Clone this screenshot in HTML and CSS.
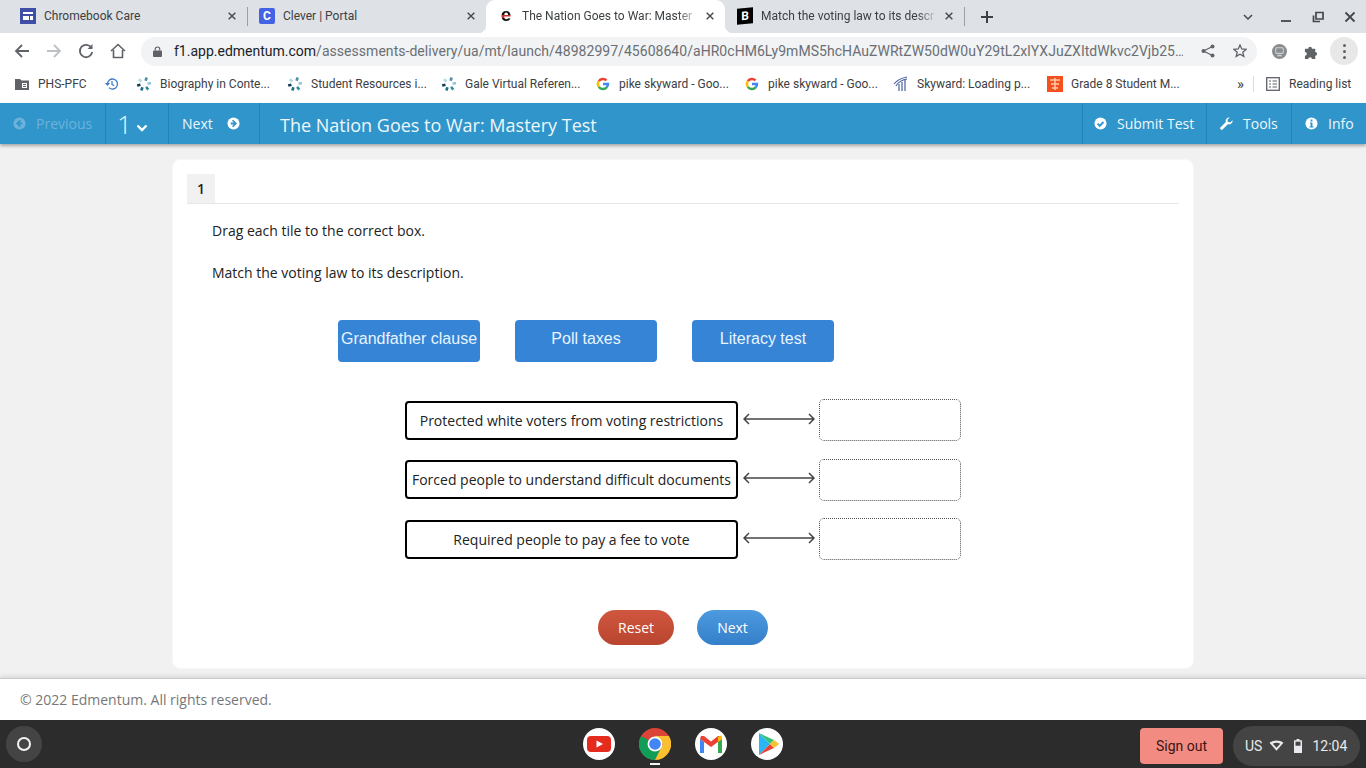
FILE: index.html
```html
<!DOCTYPE html>
<html lang="en">
<head>
    <meta charset="UTF-8">
    <meta name="viewport" content="width=device-width, initial-scale=1.0">
    <title>The Nation Goes to War: Mastery Test</title>
    <link rel="stylesheet" href="styles.css">
</head>
<body>
    <svg class="defs" width="0" height="0">
        <symbol id="i-close" viewBox="0 0 12 12"><path d="M2 2l8 8M10 2l-8 8" fill="none" stroke="currentColor" stroke-width="1.7"/></symbol>
        <symbol id="i-spin" viewBox="0 0 16 16">
            <g fill="#4f8fa8"><rect x="7" y="1" width="2.6" height="3.4" transform="rotate(20 8 8)"/><rect x="7" y="1" width="2.6" height="3.4" transform="rotate(80 8 8)" fill="#8cc6d8"/><rect x="7" y="1" width="2.6" height="3.4" transform="rotate(140 8 8)" fill="#2f8f9e"/><rect x="7" y="1" width="2.6" height="3.4" transform="rotate(200 8 8)" fill="#1e6f85"/><rect x="7" y="1" width="2.6" height="3.4" transform="rotate(255 8 8)" fill="#123f5c"/><rect x="7" y="1" width="2.6" height="3.4" transform="rotate(310 8 8)" fill="#b5dbe6"/></g>
        </symbol>
        <symbol id="i-google" viewBox="0 0 16 16">
            <g fill="none" stroke-width="2.4">
                <path d="M3.800 5.200A5 5 0 0 1 11.500 4.400" stroke="#ea4335"/>
                <path d="M3.800 5.200A5 5 0 0 0 3.800 10.800" stroke="#fbbc05"/>
                <path d="M3.800 10.800A5 5 0 0 0 11.800 11.200" stroke="#34a853"/>
                <path d="M11.800 11.200A5 5 0 0 0 13 8H8" stroke="#4285f4"/>
            </g>
        </symbol>
    </svg>

    <div class="screen">
        <!-- browser tabs -->
        <div class="tabstrip">
            <div class="tab tab-sep">
                <svg class="favicon" viewBox="0 0 16 16"><rect width="16" height="16" fill="#3f4fa8"/><path d="M3 4h10v2H3zM3 8h6v4H3zM10 8h3v4h-3z" fill="#fff"/></svg>
                <span class="tab-title">Chromebook Care</span>
                <svg class="tab-close"><use href="#i-close"/></svg>
            </div>
            <div class="tab">
                <span class="favicon clever">C</span>
                <span class="tab-title">Clever | Portal</span>
                <svg class="tab-close"><use href="#i-close"/></svg>
            </div>
            <div class="tab tab-active">
                <span class="favicon edm">e</span>
                <span class="tab-title tab-fade">The Nation Goes to War: Master</span>
                <svg class="tab-close"><use href="#i-close"/></svg>
            </div>
            <div class="tab tab-sep">
                <span class="favicon brainly">B</span>
                <span class="tab-title tab-fade">Match the voting law to its descr</span>
                <svg class="tab-close"><use href="#i-close"/></svg>
            </div>
            <svg class="new-tab" viewBox="0 0 12 12"><path d="M6 0v12M0 6h12" stroke="#3c4043" stroke-width="2"/></svg>
            <div class="window-btns">
                <svg class="win-icon" viewBox="0 0 12 12"><path d="M2 4l4 4 4-4" fill="none" stroke="#44474a" stroke-width="1.500"/></svg>
                <svg class="win-icon win-min" viewBox="0 0 12 12"><path d="M1 10h10" stroke="#44474a" stroke-width="1.800"/></svg>
                <svg class="win-icon win-max" viewBox="0 0 12 12"><path d="M4 1.500h7v6.500H4zM1.500 4.500V10.500H8" fill="none" stroke="#44474a" stroke-width="1.700"/></svg>
                <svg class="win-icon win-x" viewBox="0 0 12 12"><path d="M1.500 1.500l9 9M10.500 1.500l-9 9" stroke="#44474a" stroke-width="1.800"/></svg>
            </div>
        </div>

        <!-- address bar -->
        <div class="toolbar">
            <svg class="tool" viewBox="0 0 16 16"><path d="M15 8H2M8 2L2 8l6 6" fill="none" stroke="#5f6368" stroke-width="1.800"/></svg>
            <svg class="tool" viewBox="0 0 16 16"><path d="M1 8h13M8 2l6 6-6 6" fill="none" stroke="#bdc1c6" stroke-width="1.800"/></svg>
            <svg class="tool" viewBox="0 0 16 16"><path d="M13.500 5A6.200 6.200 0 1 0 14.200 9" fill="none" stroke="#5f6368" stroke-width="1.800"/><path d="M14.500 1v5h-5z" fill="#5f6368"/></svg>
            <svg class="tool" viewBox="0 0 16 16"><path d="M1 8l7-6.500L15 8M3.500 7v7.500h9V7" fill="none" stroke="#5f6368" stroke-width="1.600"/></svg>
            <div class="omnibox">
                <svg class="lock" viewBox="0 0 10 12"><path d="M2.500 5V3.500a2.500 2.500 0 0 1 5 0V5" fill="none" stroke="#5f6368" stroke-width="1.300"/><rect y="5" width="10" height="7" rx="1" fill="#5f6368"/></svg>
                <span class="url"><span class="url-host">f1.app.edmentum.com</span>/assessments-delivery/ua/mt/launch/48982997/45608640/aHR0cHM6Ly9mMS5hcHAuZWRtZW50dW0uY29tL2xlYXJuZXItdWkvc2Vjb25…</span>
                <svg class="omni-icon" viewBox="0 0 14 14"><circle cx="11.500" cy="2.500" r="2" fill="#5f6368"/><circle cx="2.500" cy="7" r="2" fill="#5f6368"/><circle cx="11.500" cy="11.500" r="2" fill="#5f6368"/><path d="M11.500 2.500L2.500 7l9 4.500" fill="none" stroke="#5f6368" stroke-width="1.300"/></svg>
                <svg class="omni-icon" viewBox="0 0 14 14"><path d="M7 1l1.800 4 4.200.4-3.200 2.800 1 4.200L7 10.200 3.200 12.400l1-4.200L1 5.400 5.200 5z" fill="none" stroke="#5f6368" stroke-width="1.300"/></svg>
            </div>
            <svg class="ext-profile" viewBox="0 0 16 16"><circle cx="8" cy="8" r="8" fill="#8a8d90"/><rect x="4" y="4" width="8" height="6" rx="1" fill="none" stroke="#cfd1d3" stroke-width="1.100"/><path d="M5 13c1-2 5-2 6 0" fill="#cfd1d3"/></svg>
            <svg class="ext-puzzle" viewBox="0 0 16 16"><path d="M1 5h3.500a2 2 0 1 1 4 0H12v3.500a2 2 0 1 1 0 4V16H8.500a2 2 0 1 0-4 0H1v-3.500a2 2 0 1 0 0-4z" fill="#5f6368"/></svg>
            <div class="menu-btn"><i></i><i></i><i></i></div>
        </div>

        <!-- bookmarks -->
        <div class="bookmarks">
            <svg class="bm-folder" viewBox="0 0 14 12"><path d="M0 1h5l1.500 1.500H14V12H0z" fill="#5f6368"/><path d="M7 5h5v5H7z" fill="#fff"/><path d="M8 6h3v1H8zM8 8h3v1H8z" fill="#5f6368"/></svg>
            <span class="bm bm-phs">PHS-PFC</span>
            <svg class="bm-history" viewBox="0 0 14 14"><path d="M2.500 7a5 5 0 1 1 1.500 3.600" fill="none" stroke="#3b78c2" stroke-width="1.300"/><path d="M0 6h5L2.500 9z" fill="#3b78c2"/><path d="M7 4v3.500l2.200 1.300" fill="none" stroke="#3b78c2" stroke-width="1.200"/></svg>
            <svg class="bm-icon"><use href="#i-spin"/></svg><span class="bm bm-111">Biography in Conte...</span>
            <svg class="bm-icon"><use href="#i-spin"/></svg><span class="bm bm-114">Student Resources i...</span>
            <svg class="bm-icon"><use href="#i-spin"/></svg><span class="bm bm-114">Gale Virtual Referen...</span>
            <svg class="bm-icon"><use href="#i-google"/></svg><span class="bm bm-109">pike skyward - Goo...</span>
            <svg class="bm-icon"><use href="#i-google"/></svg><span class="bm bm-109">pike skyward - Goo...</span>
            <svg class="bm-icon" viewBox="0 0 16 16"><path d="M1 8c3-4 8-6 13-7M3 10c2-4 6-6 11-7M6 15V8M9 15V6M12 15V4" fill="none" stroke="#4a5f9e" stroke-width="1.200"/></svg><span class="bm bm-114">Skyward: Loading p...</span>
            <svg class="bm-icon" viewBox="0 0 16 16"><rect width="16" height="16" fill="#f4511e"/><path d="M3 4h10M8 2v12M4 8h8M5 12h6" stroke="#ffc9a8" stroke-width="1.500"/></svg><span class="bm bm-108">Grade 8 Student M...</span>
            <span class="bm-more">»</span>
            <span class="bm-sep"></span>
            <svg class="bm-list" viewBox="0 0 14 14"><rect x=".7" y=".7" width="12.600" height="12.600" fill="none" stroke="#5f6368" stroke-width="1.300"/><path d="M3 4h2M6.500 4h4.500M3 7h2M6.500 7h4.500M3 10h2M6.500 10h4.500" stroke="#5f6368" stroke-width="1.200"/></svg>
            <span class="bm">Reading list</span>
        </div>

        <!-- test header -->
        <header class="appbar">
            <div class="bar-btn bar-prev">
                <svg class="fa" viewBox="0 0 14 14"><circle cx="7" cy="7" r="6.500" fill="currentColor"/><path d="M8 3.500L4.500 7 8 10.500M5 7h5" fill="none" stroke="#3095ca" stroke-width="1.900"/></svg>
                <span>Previous</span>
            </div>
            <div class="bar-btn bar-num">
                <span class="num">1</span>
                <svg class="chev" viewBox="0 0 12 8"><path d="M1.500 1.500L6 6l4.500-4.500" fill="none" stroke="#fff" stroke-width="2.400"/></svg>
            </div>
            <div class="bar-btn bar-next">
                <span>Next</span>
                <svg class="fa" viewBox="0 0 14 14"><circle cx="7" cy="7" r="6.500" fill="#fff"/><path d="M6 3.500L9.500 7 6 10.500M9 7H4" fill="none" stroke="#3095ca" stroke-width="1.900"/></svg>
            </div>
            <div class="bar-title">The Nation Goes to War: Mastery Test</div>
            <div class="bar-btn bar-submit">
                <svg class="fa" viewBox="0 0 14 14"><circle cx="7" cy="7" r="6.500" fill="#fff"/><path d="M3.800 7.200L6.200 9.600l4-4.200" fill="none" stroke="#3095ca" stroke-width="2"/></svg>
                <span>Submit Test</span>
            </div>
            <div class="bar-btn bar-tools">
                <svg class="fa" viewBox="0 0 14 14"><path d="M13.500 3.500a3.800 3.800 0 0 1-5 4.200L3 13.300a1.400 1.400 0 0 1-2.300-2.300l5.600-5.500A3.800 3.800 0 0 1 10.500.5L8 3l.5 2.500L11 6z" fill="#fff"/></svg>
                <span>Tools</span>
            </div>
            <div class="bar-btn bar-info">
                <svg class="fa" viewBox="0 0 14 14"><circle cx="7" cy="7" r="6.500" fill="#fff"/><path d="M6 2.800h2v2H6zM5.500 6h2.500v4h1v1.300H5V10h1V7.300h-.5z" fill="#3095ca"/></svg>
                <span>Info</span>
            </div>
        </header>

        <main class="stage">
            <section class="card">
                <div class="item-head"><span class="item-num">1</span></div>
                <p class="prompt prompt-first">Drag each tile to the correct box.</p>
                <p class="prompt prompt-second">Match the voting law to its description.</p>

                <div class="tiles">
                    <div class="tile">Grandfather clause</div>
                    <div class="tile">Poll taxes</div>
                    <div class="tile">Literacy test</div>
                </div>

                <div class="pairs">
                    <div class="pair">
                        <div class="desc">Protected white voters from voting restrictions</div>
                        <svg class="arrow" viewBox="0 0 72 12"><path d="M1 6h70M6 1L1 6l5 5M66 1l5 5-5 5" fill="none" stroke="#444" stroke-width="1.500"/></svg>
                        <div class="drop"></div>
                    </div>
                    <div class="pair">
                        <div class="desc">Forced people to understand difficult documents</div>
                        <svg class="arrow" viewBox="0 0 72 12"><path d="M1 6h70M6 1L1 6l5 5M66 1l5 5-5 5" fill="none" stroke="#444" stroke-width="1.500"/></svg>
                        <div class="drop"></div>
                    </div>
                    <div class="pair">
                        <div class="desc">Required people to pay a fee to vote</div>
                        <svg class="arrow" viewBox="0 0 72 12"><path d="M1 6h70M6 1L1 6l5 5M66 1l5 5-5 5" fill="none" stroke="#444" stroke-width="1.500"/></svg>
                        <div class="drop"></div>
                    </div>
                </div>

                <div class="actions">
                    <button class="pill pill-reset">Reset</button>
                    <button class="pill pill-next">Next</button>
                </div>
            </section>
        </main>

        <footer class="copyright">© 2022 Edmentum. All rights reserved.</footer>

        <!-- chromeos shelf -->
        <div class="shelf">
            <div class="launcher"><i></i></div>
            <div class="apps">
                <div class="app">
                    <svg viewBox="0 0 32 32"><circle cx="16" cy="16" r="16" fill="#fff"/><rect x="4" y="8" width="24" height="16" rx="4" fill="#e62b1e"/><path d="M13.500 12.500l6.500 3.500-6.500 3.500z" fill="#fff"/></svg>
                </div>
                <div class="app app-running">
                    <svg viewBox="0 0 32 32"><circle cx="16" cy="16" r="16" fill="#db4437"/><path d="M16 16L2.100 8A16 16 0 0 0 16 32l8-14z" fill="#0f9d58"/><path d="M16 8h13.900A16 16 0 0 1 16 32l8-16z" fill="#fbc02d"/><circle cx="16" cy="16" r="7.500" fill="#fff"/><circle cx="16" cy="16" r="5.800" fill="#4285f4"/></svg>
                </div>
                <div class="app">
                    <svg viewBox="0 0 32 32"><circle cx="16" cy="16" r="16" fill="#fff"/><path d="M5 25V11l4 3v11z" fill="#4285f4"/><path d="M23 25V14l4-3v14z" fill="#34a853"/><path d="M5 11l11 8 11-8-1-3-3 0-7 5.500L9 8H6z" fill="#ea4335"/><path d="M23 14l4-3V9l-1.500-1.500L23 9z" fill="#fbbc05"/></svg>
                </div>
                <div class="app">
                    <svg viewBox="0 0 32 32"><circle cx="16" cy="16" r="16" fill="#fff"/><path d="M8 5v22l11-11z" fill="#29b6f6"/><path d="M8 5l11 11 4-4z" fill="#34c279"/><path d="M8 27l11-11 4 4z" fill="#ea4335"/><path d="M23 12l5 4-5 4-4-4z" fill="#fbc02d"/></svg>
                </div>
            </div>
            <button class="signout">Sign out</button>
            <div class="status">
                <span>US</span>
                <svg class="st-wifi" viewBox="0 0 14 10"><path d="M.5 2.500C4 -.5 10 -.5 13.500 2.500L7 10z" fill="#e8eaed"/><path d="M3.500 3.400c2-1.200 5-1.200 7 0L7 7z" fill="#444"/></svg>
                <svg class="st-batt" viewBox="0 0 8 14"><path d="M2.500 0h3v1.200H7.500a.5.500 0 0 1 .5.500V13.500a.5.500 0 0 1-.5.500H.5a.5.500 0 0 1-.5-.500V1.700a.5.500 0 0 1 .5-.500h2z" fill="#e8eaed"/><rect x="1.500" y="2.700" width="5" height="4" fill="#444"/></svg>
                <span>12:04</span>
            </div>
        </div>
    </div>
</body>
</html>
```

FILE: styles.css
```css
html, body {
    margin: 0;
    padding: 0;
    overflow: hidden;
}

body {
    font-family: "Open Sans", sans-serif;
}

.defs {
    display: block;
    height: 0;
}

.screen {
    display: flex;
    flex-direction: column;
    height: 100vh;
}

/* tabs */
.tabstrip {
    display: flex;
    flex: none;
    align-items: center;
    height: 33px;
    padding-left: 8px;
    background-color: #dee1e6;
    font-family: Roboto, sans-serif;
    font-size: 12px;
    color: #3c4043;
}

.tab {
    position: relative;
    display: flex;
    flex: none;
    align-items: center;
    box-sizing: border-box;
    width: 239px;
    height: 33px;
    padding: 0 10px 2px 12px;
}

/* short divider between inactive tabs */
.tab-sep::after {
    content: "";
    position: absolute;
    top: 7px;
    right: -1px;
    width: 1px;
    height: 19px;
    background-color: #9aa0a6;
}

.tab-active {
    border-radius: 9px 9px 0 0;
    background-color: #fff;
}

/* curved feet on the active tab */
.tab-active::before,
.tab-active::after {
    content: "";
    position: absolute;
    bottom: 0;
    width: 8px;
    height: 8px;
}

.tab-active::before {
    left: -8px;
    background: radial-gradient(circle at 0 0, transparent 8px, #fff 8.5px);
}

.tab-active::after {
    right: -8px;
    background: radial-gradient(circle at 100% 0, transparent 8px, #fff 8.5px);
}

.favicon {
    flex: none;
    display: block;
    width: 16px;
    height: 16px;
    margin-right: 8px;
    text-align: center;
    font-weight: 700;
    font-size: 12px;
    line-height: 16px;
}

.clever {
    border-radius: 2px;
    background-color: #4362e6;
    color: #fff;
}

.edm {
    background: linear-gradient(#111 46%, #c9302c 46% 60%, #111 60%);
    -webkit-background-clip: text;
    background-clip: text;
    color: transparent;
    font-family: "Liberation Sans", sans-serif;
    font-size: 19px;
    line-height: 14px;
}

.brainly {
    background-color: #000;
    color: #fff;
    transform: skewY(-5deg);
}

.tab-title {
    flex: 1;
    overflow: hidden;
    white-space: nowrap;
}

.tab-fade {
    -webkit-mask-image: linear-gradient(to right, #000 88%, transparent 100%);
    mask-image: linear-gradient(to right, #000 88%, transparent 100%);
}

.tab-close {
    flex: none;
    width: 10px;
    height: 10px;
    margin-left: 6px;
    color: #45484c;
}

.new-tab {
    width: 12px;
    height: 12px;
    margin-left: 17px;
}

.window-btns {
    display: flex;
    align-items: center;
    margin-left: auto;
}

.win-icon {
    width: 12px;
    height: 12px;
    margin-right: 26px;
}

.win-min,
.win-max {
    margin-right: 20px;
}

.win-x {
    margin-right: 10px;
}

/* address bar */
.toolbar {
    display: flex;
    flex: none;
    align-items: center;
    height: 36px;
    padding-left: 14px;
    background-color: #fff;
}

.tool {
    flex: none;
    width: 16px;
    height: 16px;
    margin-right: 16px;
}

.omnibox {
    display: flex;
    flex: none;
    align-items: center;
    box-sizing: border-box;
    width: 1116px;
    height: 29px;
    margin: 1px 0 0 -1px;
    padding: 0 10px 1px 12px;
    border-radius: 15px;
    background-color: #f1f3f4;
}

.lock {
    flex: none;
    width: 9px;
    height: 11px;
    margin-right: 12px;
}

.url {
    flex: 1;
    overflow: hidden;
    white-space: nowrap;
    font-family: Roboto, sans-serif;
    font-size: 14px;
    letter-spacing: .04px;
    color: #6b6f74;
}

.url-host {
    color: #202124;
    letter-spacing: 0;
}

.omni-icon {
    flex: none;
    width: 14px;
    height: 14px;
    margin-left: 18px;
}

.ext-profile {
    flex: none;
    width: 15px;
    height: 15px;
    margin-left: 15px;
}

.ext-puzzle {
    flex: none;
    width: 15px;
    height: 15px;
    margin-left: 17px;
}

.menu-btn {
    display: flex;
    flex: none;
    flex-direction: column;
    align-items: center;
    justify-content: center;
    gap: 3px;
    width: 28px;
    height: 28px;
    margin-left: 11px;
    border-radius: 50%;
    background-color: #e8e8e8;
}

.menu-btn i {
    width: 3px;
    height: 3px;
    border-radius: 50%;
    background-color: #5f6368;
}

/* bookmarks */
.bookmarks {
    display: flex;
    flex: none;
    align-items: center;
    box-sizing: border-box;
    height: 34px;
    padding: 0 0 4px 15px;
    background-color: #fff;
    font-family: Roboto, sans-serif;
    font-size: 12px;
    color: #3c4043;
}

.bm {
    flex: none;
    white-space: nowrap;
}

.bm-folder {
    flex: none;
    width: 14px;
    height: 12px;
}

.bm-phs {
    width: 50px;
    margin-left: 9px;
}

.bm-history {
    flex: none;
    width: 14px;
    height: 14px;
    margin: 0 1px 0 17px;
}

.bm-icon {
    flex: none;
    width: 16px;
    height: 16px;
    margin: 0 8px 0 16px;
}

.bm-111 { width: 111px; }
.bm-114 { width: 114px; }
.bm-109 { width: 109px; }
.bm-108 { width: 108px; }

.bm-more {
    margin-left: 58px;
    font-size: 15px;
    line-height: 15px;
}

.bm-sep {
    width: 1px;
    height: 16px;
    margin-left: 9px;
    background-color: #dadce0;
}

.bm-list {
    flex: none;
    width: 14px;
    height: 14px;
    margin: 0 9px 0 12px;
}

/* test header */
.appbar {
    position: relative;
    z-index: 1;
    display: flex;
    flex: none;
    align-items: stretch;
    height: 41px;
    background-color: #3095ca;
    box-shadow: 0 2px 3px rgba(0, 0, 0, .3);
    color: #eef7fb;
    font-size: 14px;
}

.bar-btn {
    display: flex;
    flex: none;
    align-items: center;
    box-sizing: border-box;
    border-right: 1px solid #2482b5;
    gap: 10px;
}

.fa {
    flex: none;
    width: 13px;
    height: 13px;
}

.bar-prev {
    width: 106px;
    padding-left: 13px;
    color: #6bb3da;
}

.bar-num {
    width: 63px;
    padding-left: 11px;
    gap: 4px;
}

.num {
    font-size: 26px;
    font-weight: 300;
}

.chev {
    width: 12px;
    height: 8px;
    margin-top: 8px;
}

.bar-next {
    width: 91px;
    padding-left: 13px;
    gap: 14px;
}

.bar-title {
    flex: 1;
    align-self: center;
    padding: 2px 0 0 20px;
    font-size: 18px;
}

.bar-submit {
    width: 125px;
    padding-left: 11px;
    border-left: 1px solid #2482b5;
}

.bar-tools {
    width: 85px;
    padding-left: 13px;
}

.bar-info {
    width: 74px;
    padding-left: 13px;
    border-right: 0;
}

/* question card */
.stage {
    flex: 1;
    padding-top: 15px;
    background-color: #f1f1f1;
}

.card {
    box-sizing: border-box;
    width: 1022px;
    height: 510px;
    margin: 0 auto;
    padding: 14px 14px 0;
    border: 1px solid #f7f7f7;
    border-radius: 8px;
    background-color: #fff;
    color: #222;
    font-size: 14px;
}

.item-head {
    height: 29px;
    border-bottom: 1px solid #e6e6e6;
}

.item-num {
    display: block;
    width: 28px;
    height: 29px;
    background-color: #f1f1f1;
    text-align: center;
    font-weight: 600;
    line-height: 29px;
}

.prompt {
    height: 20px;
    margin: 0 0 0 25px;
    line-height: 20px;
}

.prompt-first {
    margin-top: 17px;
}

.prompt-second {
    margin-top: 22px;
}

.tiles {
    display: flex;
    gap: 35px;
    margin: 37px 0 0 151px;
}

.tile {
    width: 142px;
    height: 42px;
    border-radius: 4px;
    background-color: #3584d6;
    color: #e8f4ff;
    text-align: center;
    font-family: "Liberation Sans", sans-serif;
    font-size: 16px;
    line-height: 38px;
}

.pairs {
    display: flex;
    flex-direction: column;
    gap: 17.5px;
    margin: 37px 0 0 218px;
}

.pair {
    display: flex;
    align-items: center;
}

.desc {
    box-sizing: border-box;
    width: 333px;
    height: 39px;
    border: 2px solid #000;
    border-radius: 4px;
    color: #222;
    text-align: center;
    line-height: 35px;
    white-space: nowrap;
}

.arrow {
    flex: none;
    width: 72px;
    height: 12px;
    margin: -3px 4px 0 5px;
}

.drop {
    box-sizing: border-box;
    width: 142px;
    height: 42px;
    border: 1px dotted #555;
    border-radius: 5px;
}

.actions {
    display: flex;
    justify-content: center;
    gap: 23px;
    margin-top: 50px;
}

.pill {
    height: 35px;
    padding: 0;
    border: 0;
    border-radius: 18px;
    color: #fff;
    font-family: "Open Sans", sans-serif;
    font-size: 14px;
}

.pill-reset {
    width: 76px;
    background: linear-gradient(#d0573f, #b9452f);
}

.pill-next {
    width: 71px;
    background: linear-gradient(#4d9ae0, #347fc9);
}

.copyright {
    flex: none;
    box-sizing: border-box;
    height: 42px;
    padding-left: 20px;
    border-top: 1px solid #ccc;
    background-color: #fff;
    box-shadow: 0 -2px 4px rgba(0, 0, 0, .1);
    color: #777;
    font-size: 14px;
    line-height: 42px;
}

/* shelf */
.shelf {
    display: flex;
    flex: none;
    align-items: center;
    height: 48px;
    padding: 0 6px;
    background-color: #2c2c2c;
    font-family: Roboto, sans-serif;
}

.launcher {
    display: flex;
    flex: none;
    align-items: center;
    justify-content: center;
    width: 36px;
    height: 36px;
    border-radius: 50%;
    background-color: #444;
}

.launcher i {
    box-sizing: border-box;
    width: 14px;
    height: 14px;
    border: 2px solid #f1f3f4;
    border-radius: 50%;
}

.apps {
    display: flex;
    flex: none;
    gap: 24px;
    margin-left: 541px;
}

.app {
    position: relative;
    width: 32px;
    height: 32px;
}

.app svg {
    display: block;
    width: 32px;
    height: 32px;
}

.app-running::after {
    content: "";
    position: absolute;
    left: 11px;
    bottom: -5px;
    width: 10px;
    height: 2px;
    background-color: #f1f3f4;
}

.signout {
    flex: none;
    width: 83px;
    height: 36px;
    margin: 4px 0 0 auto;
    padding: 0;
    border: 0;
    border-radius: 4px;
    background-color: #f28b82;
    color: #3c1512;
    font-family: Roboto, sans-serif;
    font-size: 14px;
}

.status {
    display: flex;
    flex: none;
    align-items: center;
    box-sizing: border-box;
    width: 127px;
    height: 40px;
    margin: 4px 0 0 10px;
    padding: 0 0 1px 12px;
    border-radius: 20px;
    background-color: #444;
    color: #e8eaed;
    font-size: 14px;
}

.st-wifi {
    width: 15px;
    height: 11px;
    margin-left: 7px;
}

.st-batt {
    width: 8px;
    height: 14px;
    margin: 0 10px;
}
```
